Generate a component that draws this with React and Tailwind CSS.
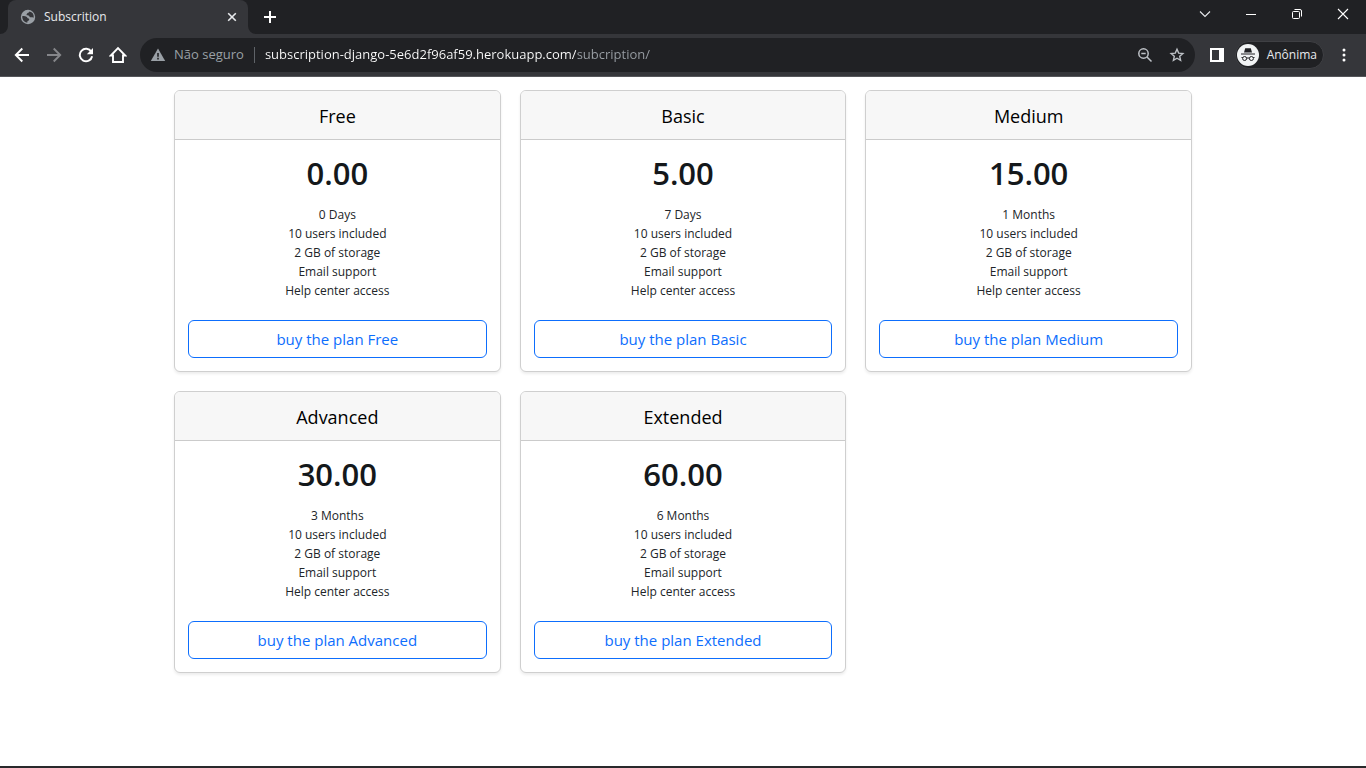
import React from "react";

const plans = [
  { name: "Free", price: "0.00", period: "0 Days" },
  { name: "Basic", price: "5.00", period: "7 Days" },
  { name: "Medium", price: "15.00", period: "1 Months" },
  { name: "Advanced", price: "30.00", period: "3 Months" },
  { name: "Extended", price: "60.00", period: "6 Months" },
];

const features = ["10 users included", "2 GB of storage", "Email support", "Help center access"];

function IconButton({ label, className, children }) {
  return (
    <button type="button" aria-label={label} className={`flex shrink-0 items-center justify-center ${className}`}>
      {children}
    </button>
  );
}

function GlobeIcon() {
  return (
    <svg width="16" height="16" viewBox="0 0 16 16" aria-hidden="true">
      <circle cx="8" cy="8" r="7.2" fill="#9aa0a6" />
      <path
        d="M2.300 7c1.700-.2 3.200-.1 4.600.9.500.4.200 1.100.9 1.300 1.100.2 1.700.8 1.300 1.800-.4.900-1.600.5-1.700 1.600l-.1 1.100A5.700 5.700 0 0 1 2.300 7Z M9.300 2.400c.1 1-1 1.100-1.700 1.500-.8.500-.6 1.400-1.300 2.100.9.700 1.900.2 2.700.8.600.5.300 1.300 1.200 1.500 1.100.2 1.600-.4 2.300 0 .5.3.8.5 1.200.3A5.700 5.700 0 0 0 9.300 2.400Z"
        fill="#35363a"
      />
    </svg>
  );
}

function TabStrip() {
  return (
    <div className="flex h-[34px] items-stretch bg-[#202124] pl-2">
      <div className="relative flex w-60 items-center rounded-t-lg bg-[#35363a] pl-3 pr-2">
        <svg className="absolute -left-2 bottom-0" width="8" height="8" aria-hidden="true">
          <path d="M8 0v8H0a8 8 0 0 0 8-8Z" fill="#35363a" />
        </svg>
        <svg className="absolute -right-2 bottom-0" width="8" height="8" aria-hidden="true">
          <path d="M0 0v8h8a8 8 0 0 1-8-8Z" fill="#35363a" />
        </svg>
        <GlobeIcon />
        <span className="ml-2 grow text-xs text-[#e8eaed]">Subscrition</span>
        <IconButton label="Close tab" className="h-4 w-4">
          <svg width="10" height="10" viewBox="0 0 10 10" stroke="#e8eaed" strokeWidth="1.6" aria-hidden="true">
            <path d="M1.200 1.200l7.600 7.600M8.800 1.200L1.200 8.800" />
          </svg>
        </IconButton>
      </div>
      <IconButton label="New tab" className="ml-2 h-[34px] w-7">
        <svg width="12" height="12" viewBox="0 0 12 12" stroke="#fff" strokeWidth="2" aria-hidden="true">
          <path d="M6 0v12M0 6h12" />
        </svg>
      </IconButton>
      <div className="ml-auto flex h-7">
        <IconButton label="Search tabs" className="w-[46px]">
          <svg width="12" height="12" viewBox="0 0 12 12" fill="none" stroke="#e8eaed" strokeWidth="1.1" aria-hidden="true">
            <path d="M1 3.500l5 5 5-5" />
          </svg>
        </IconButton>
        <IconButton label="Minimize" className="w-[46px]">
          <svg width="10" height="10" viewBox="0 0 10 10" stroke="#fff" aria-hidden="true">
            <path d="M0 5.500h10" />
          </svg>
        </IconButton>
        <IconButton label="Restore" className="w-[46px]">
          <svg width="10" height="10" viewBox="0 0 10 10" fill="none" stroke="#fff" aria-hidden="true">
            <rect x=".5" y="2.500" width="7" height="7" rx="1" />
            <path d="M2.500 .5H8a1.500 1.500 0 0 1 1.500 1.500v5.500" />
          </svg>
        </IconButton>
        <IconButton label="Close" className="w-[46px]">
          <svg width="12" height="12" viewBox="0 0 12 12" stroke="#fff" strokeWidth="1.100" aria-hidden="true">
            <path d="M1 1l10 10M11 1L1 11" />
          </svg>
        </IconButton>
      </div>
    </div>
  );
}

function Toolbar() {
  return (
    <div className="flex h-[43px] items-center border-b border-[#55565a] bg-[#35363a] px-1.5">
      <IconButton label="Back" className="h-8 w-8">
        <svg width="16" height="16" viewBox="0 0 16 16" fill="none" stroke="#fff" strokeWidth="1.900" aria-hidden="true">
          <path d="M15 8H2.200M8.300 1.500L1.800 8l6.500 6.500" />
        </svg>
      </IconButton>
      <IconButton label="Forward" className="h-8 w-8">
        <svg width="16" height="16" viewBox="0 0 16 16" fill="none" stroke="#85868a" strokeWidth="1.900" aria-hidden="true">
          <path d="M1 8h12.800M7.700 1.500L14.200 8l-6.500 6.500" />
        </svg>
      </IconButton>
      <IconButton label="Reload" className="h-8 w-8">
        <svg width="16" height="16" viewBox="0 0 16 16" fill="none" aria-hidden="true">
          <path d="M13.300 4.800A6.200 6.200 0 1 0 14.100 9.200" stroke="#fff" strokeWidth="2" />
          <path d="M15 1v6.200H8.800Z" fill="#fff" />
        </svg>
      </IconButton>
      <IconButton label="Home" className="h-8 w-8">
        <svg width="18" height="18" viewBox="0 0 18 18" fill="none" stroke="#fff" strokeWidth="1.900" aria-hidden="true">
          <path d="M1.800 9.500H4v6.500h10V9.500h2.200L9 2.200Z" />
        </svg>
      </IconButton>
      <div className="ml-1.5 flex h-[34px] min-w-0 grow items-center rounded-full bg-[#202124] pl-2.5 pr-0.5">
        <svg width="16" height="16" viewBox="0 0 16 16" aria-hidden="true" className="shrink-0">
          <path d="M8 1.500L15.200 14H.8Z" fill="#9aa0a6" />
          <path d="M7.200 6h1.600v3.800H7.200ZM7.200 10.800h1.600v1.600H7.200Z" fill="#202124" />
        </svg>
        <span className="ml-2 shrink-0 text-[13px] text-[#9aa0a6]">Não seguro</span>
        <span className="mx-2.5 h-4 w-px shrink-0 bg-[#5f6368]" />
        <input
          type="text"
          aria-label="Address"
          defaultValue="subscription-django-5e6d2f96af59.herokuapp.com/subcription/"
          className="min-w-0 grow bg-[linear-gradient(90deg,#ffffff_311px,#9aa0a6_311px)] bg-clip-text text-[13px] text-transparent outline-none"
        />
        <IconButton label="Zoom" className="h-8 w-8">
          <svg width="16" height="16" viewBox="0 0 16 16" fill="none" stroke="#bdc1c6" strokeWidth="1.500" aria-hidden="true">
            <circle cx="6.500" cy="6.500" r="4.700" />
            <path d="M10 10l4.500 4.500M4.300 6.500h4.400" />
          </svg>
        </IconButton>
        <IconButton label="Bookmark this page" className="h-8 w-8">
          <svg width="16" height="16" viewBox="0 0 16 16" fill="none" stroke="#bdc1c6" strokeWidth="1.400" aria-hidden="true">
            <path d="M8 2.200l1.700 3.900 4.200.4-3.200 2.800.9 4.100L8 11.200l-3.600 2.200.9-4.100-3.200-2.800 4.200-.4Z" />
          </svg>
        </IconButton>
      </div>
      <IconButton label="Side panel" className="ml-1.5 h-8 w-8">
        <svg width="14" height="14" viewBox="0 0 14 14" aria-hidden="true">
          <path fillRule="evenodd" d="M0 0h14v14H0ZM2 2v10h7V2Z" fill="#fff" />
        </svg>
      </IconButton>
      <button
        type="button"
        className="ml-0.5 flex h-7 shrink-0 items-center gap-2 rounded-full border border-[#3f4044] bg-[#202124] pr-1.5 text-xs text-[#e8eaed]"
      >
        <svg width="22" height="22" viewBox="0 0 22 22" className="ml-px" aria-hidden="true">
          <circle cx="11" cy="11" r="11" fill="#f1f3f4" />
          <path d="M8.200 4.300h5.600l1.200 4.200H7ZM4 9.400h14v1.200H4Z" fill="#202124" />
          <g fill="none" stroke="#202124" strokeWidth="1">
            <circle cx="7.600" cy="14.500" r="2" />
            <circle cx="14.400" cy="14.500" r="2" />
            <path d="M9.600 14.300q1.400-.9 2.800 0M4.500 13.500h1.300M16.200 13.500h1.300" />
          </g>
        </svg>
        Anônima
      </button>
      <IconButton label="Menu" className="ml-1 h-8 w-8">
        <svg width="4" height="14" viewBox="0 0 4 14" fill="#fff" aria-hidden="true">
          <circle cx="2" cy="2" r="1.500" />
          <circle cx="2" cy="7" r="1.500" />
          <circle cx="2" cy="12" r="1.500" />
        </svg>
      </IconButton>
    </div>
  );
}

function PlanCard({ name, price, period }) {
  return (
    <article className="overflow-hidden rounded-md border border-[#cfcfcf] bg-white text-center text-[#212529] shadow-[0_2px_3px_rgba(0,0,0,0.075)]">
      <header className="border-b border-[#cbcbcb] bg-[#f7f7f7] pt-[13px] pb-[11px]">
        <h2 className="text-lg leading-6 font-normal text-black">{name}</h2>
      </header>
      <div className="px-[13px] pt-[14px] pb-[13px]">
        <p className="text-[31px] leading-[39px] font-semibold text-[#14181b]">{price}</p>
        <ul className="mt-3 mb-5 text-xs leading-[19px]">
          <li>{period}</li>
          {features.map((feature) => (
            <li key={feature}>{feature}</li>
          ))}
        </ul>
        <button
          type="button"
          className="h-[38px] w-full rounded-md border border-[#0d6efd] text-[15px] text-[#0d6efd]"
        >
          buy the plan {name}
        </button>
      </div>
    </article>
  );
}

export default function App() {
  return (
    <div className="flex min-h-screen flex-col border-b-2 border-[#29292b] bg-white font-['Open_Sans','Noto_Sans',sans-serif]">
      <div>
        <TabStrip />
        <Toolbar />
      </div>
      <main className="mx-auto grid w-full max-w-[1018px] grid-cols-1 gap-[19px] pt-[13px] pb-5 sm:grid-cols-2 md:grid-cols-3">
        {plans.map((plan) => (
          <PlanCard key={plan.name} {...plan} />
        ))}
      </main>
    </div>
  );
}
